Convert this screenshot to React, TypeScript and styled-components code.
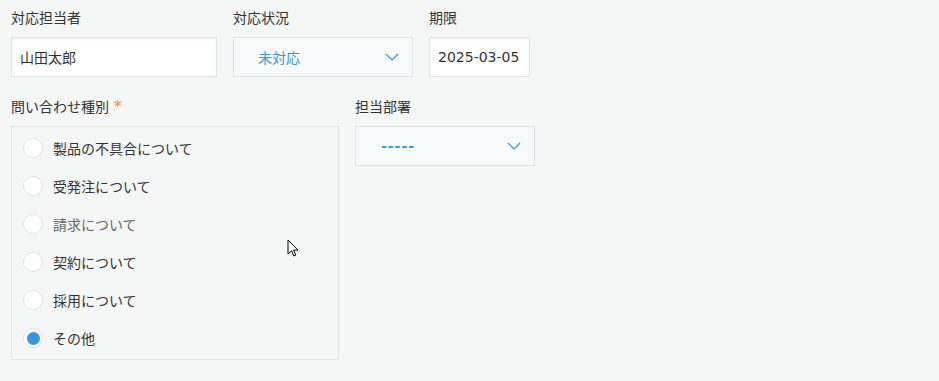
import { createGlobalStyle, styled } from "styled-components";

const GlobalStyle = createGlobalStyle`
  html, body {
    margin: 0;
    padding: 0;
    background: #f5f6f6;
  }
  body {
    font-family: "Noto Sans CJK JP", "Noto Sans", sans-serif;
    font-size: 14px;
    color: #333;
  }
`;

const Page = styled.div`
  position: relative;
  width: 939px;
  height: 381px;
  padding: 7px 11px 0;
  box-sizing: border-box;
`;

const Row = styled.div<{ $top?: number }>`
  display: flex;
  gap: 16px;
  align-items: flex-start;
  margin-top: ${(p) => p.$top ?? 0}px;
`;

const Field = styled.div`
  display: flex;
  flex-direction: column;
`;

const Label = styled.div`
  height: 20px;
  line-height: 20px;
  margin-bottom: 10px;
  font-size: 14px;
  white-space: nowrap;
  display: flex;
  align-items: center;
`;

const Required = styled.span`
  color: #ee8434;
  margin-left: 5px;
  font-family: "DejaVu Sans", sans-serif;
  font-size: 15px;
  line-height: 1;
  margin-top: 2px;
`;

const TextInput = styled.div<{ $width: number; $mono?: boolean }>`
  width: ${(p) => p.$width}px;
  height: 40px;
  box-sizing: border-box;
  border: 1px solid #e3e3e3;
  background: #fff;
  box-shadow: inset 0 1px 3px #f0f0f0;
  padding: 0 8px;
  display: flex;
  align-items: center;
  font-size: 14px;
  white-space: nowrap;
  font-family: ${(p) =>
    p.$mono ? '"DejaVu Sans", sans-serif' : '"Noto Sans CJK JP", sans-serif'};
`;

const Select = styled.div`
  width: 180px;
  height: 40px;
  box-sizing: border-box;
  border: 1px solid #e3e3e3;
  background: #f7f9fa;
  padding: 0 13px 0 24px;
  display: flex;
  align-items: center;
  justify-content: space-between;
  color: #3498db;
  font-size: 14px;
`;

const Dashes = styled.span`
  font-family: "DejaVu Sans", sans-serif;
  letter-spacing: 1px;
  margin-left: 1px;
  font-weight: bold;
`;

const RadioBox = styled.div`
  width: 328px;
  box-sizing: border-box;
  border: 1px solid #e3e3e3;
  padding: 2px 11px;
  display: flex;
  flex-direction: column;
`;

const RadioRow = styled.div<{ $muted?: boolean }>`
  height: 38px;
  display: flex;
  align-items: center;
  gap: 10px;
  font-size: 14px;
  color: ${(p) => (p.$muted ? "#666" : "#333")};
`;

const Circle = styled.span<{ $checked?: boolean }>`
  width: 20px;
  height: 20px;
  box-sizing: border-box;
  border-radius: 50%;
  border: 1px solid #e3e3e3;
  background: #fff;
  display: flex;
  align-items: center;
  justify-content: center;
  &::after {
    content: "";
    width: 13px;
    height: 13px;
    border-radius: 50%;
    background: ${(p) => (p.$checked ? "#3498db" : "transparent")};
  }
`;

const Cursor = styled.svg`
  position: absolute;
  left: 287px;
  top: 239px;
`;

const Chevron = () => (
  <svg width="14" height="8" viewBox="0 0 14 8">
    <path d="M1 1l6 6 6-6" fill="none" stroke="#3498db" strokeWidth="1.2" />
  </svg>
);

const options = [
  "製品の不具合について",
  "受発注について",
  "請求について",
  "契約について",
  "採用について",
  "その他",
];

export default function App() {
  return (
    <>
      <GlobalStyle />
      <Page>
        <Row>
          <Field>
            <Label>対応担当者</Label>
            <TextInput $width={206}>山田太郎</TextInput>
          </Field>
          <Field>
            <Label>対応状況</Label>
            <Select>
              <span>未対応</span>
              <Chevron />
            </Select>
          </Field>
          <Field>
            <Label>期限</Label>
            <TextInput $width={101} $mono>
              2025-03-05
            </TextInput>
          </Field>
        </Row>
        <Row $top={19}>
          <Field>
            <Label>
              問い合わせ種別<Required>*</Required>
            </Label>
            <RadioBox>
              {options.map((o, i) => (
                <RadioRow key={o} $muted={i === 2}>
                  <Circle $checked={i === 5} />
                  <span>{o}</span>
                </RadioRow>
              ))}
            </RadioBox>
          </Field>
          <Field>
            <Label>担当部署</Label>
            <Select>
              <Dashes>-----</Dashes>
              <Chevron />
            </Select>
          </Field>
        </Row>
        <Cursor width="14" height="20" viewBox="0 0 14 20">
          <path
            d="M1 1v14l3.5-3.2 2.3 5.2 2-0.9-2.2-5H11z"
            fill="#fff"
            stroke="#000"
            strokeWidth="1"
            strokeLinejoin="round"
          />
        </Cursor>
      </Page>
    </>
  );
}
